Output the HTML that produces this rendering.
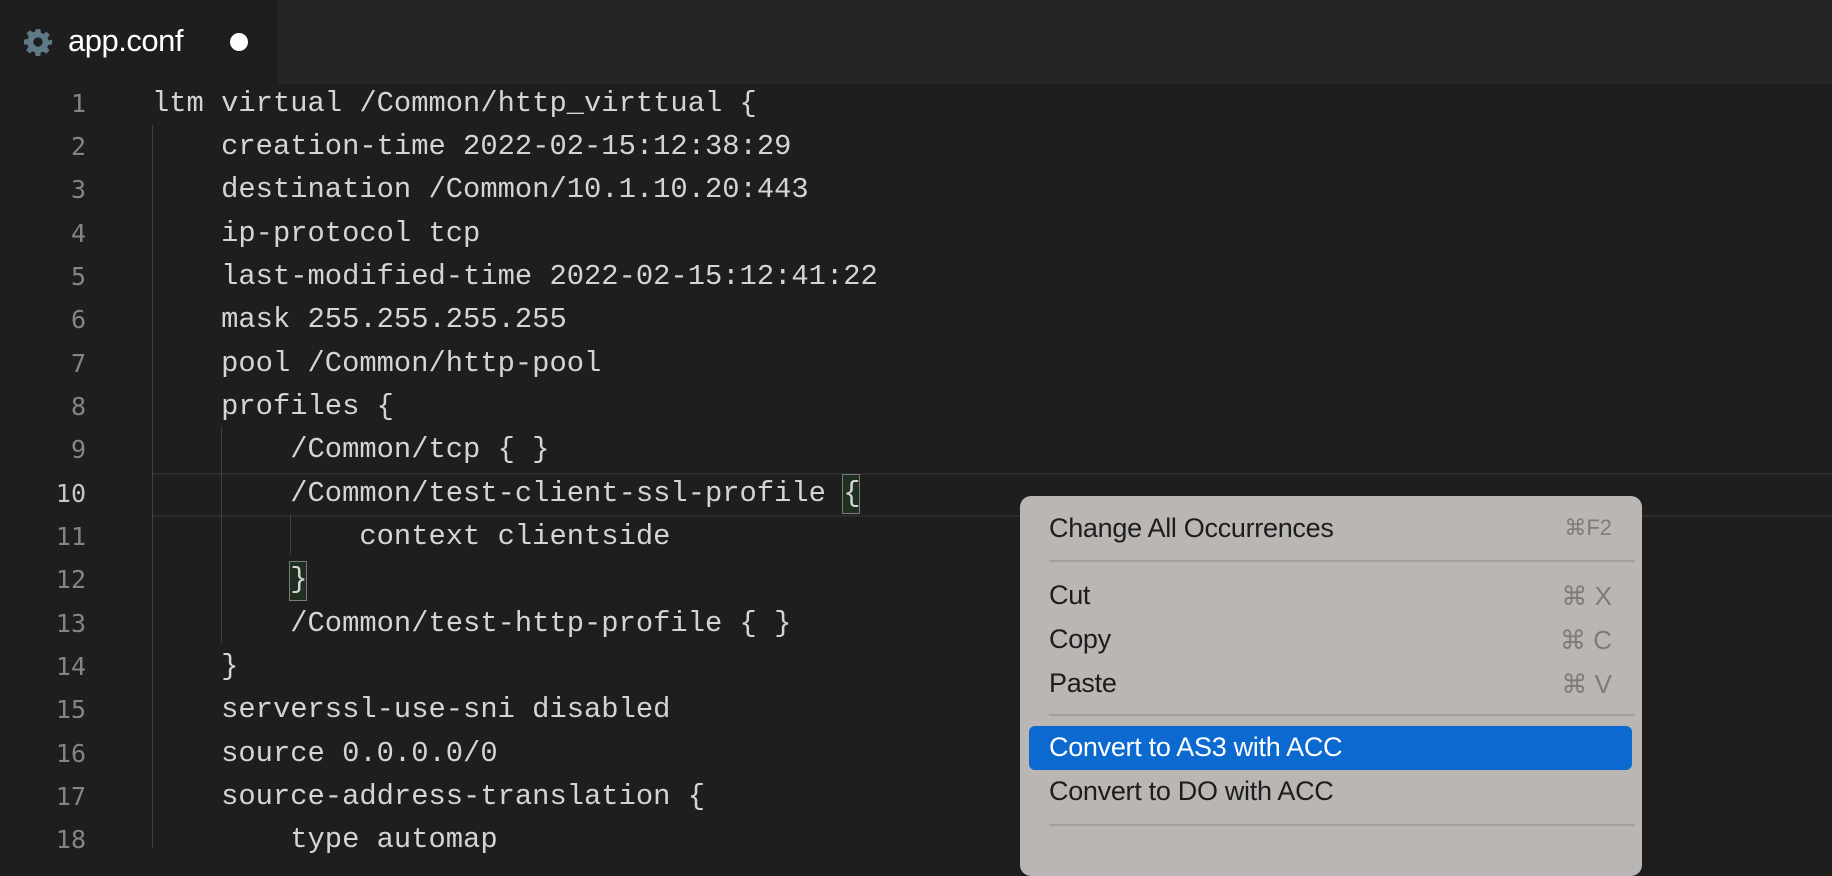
<!DOCTYPE html>
<html><head><meta charset="utf-8"><style>
html,body{margin:0;padding:0;width:1832px;height:848px;overflow:hidden;background:#1e1e1e;}
.tabbar{position:absolute;left:0;top:0;width:1832px;height:84px;background:#252526;}
.tab{position:absolute;left:0;top:0;width:278px;height:84px;background:#1e1e1e;}
.tab .name{position:absolute;left:68px;top:23px;font:31px "Liberation Sans",sans-serif;color:#fff;letter-spacing:-0.5px;}
.tab .dot{position:absolute;left:230px;top:33px;width:18px;height:18px;border-radius:50%;background:#fff;}
.ln{position:absolute;left:0;width:86px;text-align:right;font:25px "DejaVu Sans Mono","Liberation Mono",monospace;color:#858585;}
.code{position:absolute;left:152px;font:28.8px "Liberation Mono",monospace;color:#d4d4d4;white-space:pre;}
.guide{position:absolute;width:1px;background:#404040;}
.hl{position:absolute;left:152px;top:473px;width:1680px;height:40px;border-top:2px solid #2c2c2c;border-bottom:2px solid #2c2c2c;}
.br{position:absolute;width:16px;height:38px;border:1px solid #7a7a7a;background:#1f3020;}
.menu{position:absolute;left:1020px;top:496px;width:622px;height:380px;background:#bab6b4;border-radius:11px;font:27px "Liberation Sans",sans-serif;color:#1d1d1d;}
.mi{position:absolute;left:29px;letter-spacing:-0.3px;}
.sc{position:absolute;right:30px;color:#7f7b7a;font-size:26px;}
.sep{position:absolute;left:29px;width:586px;height:2px;background:#a3a09e;}
.sel{position:absolute;left:9px;top:230px;width:603px;height:44px;background:#0b69d0;border-radius:6px;}
</style></head><body>
<div class="tabbar"></div>
<div class="tab">
<svg style="position:absolute;left:24px;top:28px" width="28" height="28" viewBox="0 0 24 24"><path fill="#5e7a87" d="M10 1h4l.6 3.2 2 .9 2.7-1.9 2.8 2.8-1.9 2.7.9 2L24 10v4l-3.2.6-.9 2 1.9 2.7-2.8 2.8-2.7-1.9-2 .9L14 24h-4l-.6-3.2-2-.9-2.7 1.9-2.8-2.8 1.9-2.7-.9-2L0 14v-4l3.2-.6.9-2L2.2 4.7 5 1.9l2.7 1.9 2-.9zM12 8a4 4 0 100 8 4 4 0 000-8z"/></svg>
<div class="name">app.conf</div><div class="dot"></div></div>

<div class="hl"></div>
<div class="guide" style="left:152px;top:125px;height:723px"></div>
<div class="guide" style="left:221px;top:427px;height:216px"></div>
<div class="guide" style="left:290px;top:514px;height:40px"></div>
<div class="br" style="left:842px;top:474px"></div>
<div class="br" style="left:289px;top:561px"></div>

<div class="ln" style="top:89px">1</div><div class="code" style="top:87px">ltm virtual /Common/http_virttual {</div>
<div class="ln" style="top:132px">2</div><div class="code" style="top:130px">    creation-time 2022-02-15:12:38:29</div>
<div class="ln" style="top:175px">3</div><div class="code" style="top:173px">    destination /Common/10.1.10.20:443</div>
<div class="ln" style="top:219px">4</div><div class="code" style="top:217px">    ip-protocol tcp</div>
<div class="ln" style="top:262px">5</div><div class="code" style="top:260px">    last-modified-time 2022-02-15:12:41:22</div>
<div class="ln" style="top:305px">6</div><div class="code" style="top:303px">    mask 255.255.255.255</div>
<div class="ln" style="top:349px">7</div><div class="code" style="top:347px">    pool /Common/http-pool</div>
<div class="ln" style="top:392px">8</div><div class="code" style="top:390px">    profiles {</div>
<div class="ln" style="top:435px">9</div><div class="code" style="top:433px">        /Common/tcp { }</div>
<div class="ln" style="top:479px;color:#c6c6c6">10</div><div class="code" style="top:477px">        /Common/test-client-ssl-profile {</div>
<div class="ln" style="top:522px">11</div><div class="code" style="top:520px">            context clientside</div>
<div class="ln" style="top:565px">12</div><div class="code" style="top:563px">        }</div>
<div class="ln" style="top:609px">13</div><div class="code" style="top:607px">        /Common/test-http-profile { }</div>
<div class="ln" style="top:652px">14</div><div class="code" style="top:650px">    }</div>
<div class="ln" style="top:695px">15</div><div class="code" style="top:693px">    serverssl-use-sni disabled</div>
<div class="ln" style="top:739px">16</div><div class="code" style="top:737px">    source 0.0.0.0/0</div>
<div class="ln" style="top:782px">17</div><div class="code" style="top:780px">    source-address-translation {</div>
<div class="ln" style="top:825px">18</div><div class="code" style="top:823px">        type automap</div>

<div class="menu">
<div class="mi" style="top:17px">Change All Occurrences</div><div class="sc" style="top:19px;font-size:22px">⌘F2</div>
<div class="sep" style="top:64px"></div>
<div class="mi" style="top:84px">Cut</div><div class="sc" style="top:85px">⌘ X</div>
<div class="mi" style="top:128px">Copy</div><div class="sc" style="top:129px">⌘ C</div>
<div class="mi" style="top:172px">Paste</div><div class="sc" style="top:173px">⌘ V</div>
<div class="sep" style="top:218px"></div>
<div class="sel"></div>
<div class="mi" style="top:236px;color:#fff">Convert to AS3 with ACC</div>
<div class="mi" style="top:280px">Convert to DO with ACC</div>
<div class="sep" style="top:328px"></div>
</div>
</body></html>
